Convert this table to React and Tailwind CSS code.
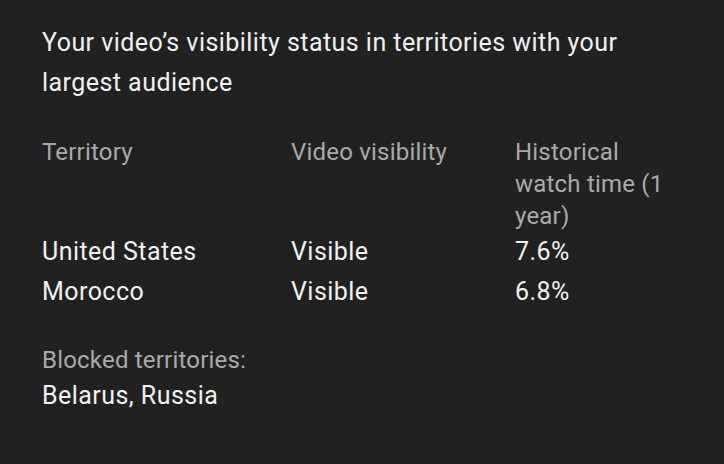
const rows = [
  { territory: 'United States', visibility: 'Visible', watch: '7.6%' },
  { territory: 'Morocco', visibility: 'Visible', watch: '6.8%' },
];

export default function App() {
  return (
    <div className="min-h-[464px] bg-[#212121] pt-[23px] pl-[42px] pr-[42px] text-[25px] tracking-[0.45px] text-[#f1f1f1] font-['Roboto',sans-serif]">
      <h1 className="leading-[40px] font-normal">
        Your video’s visibility status in territories with your largest audience
      </h1>

      <div className="mt-[33px] grid grid-cols-[249px_224px_1fr]">
        <div className="text-[24px] tracking-[0.2px] leading-[32px] text-[#aaaaaa]">Territory</div>
        <div className="text-[24px] tracking-[0.2px] leading-[32px] text-[#aaaaaa]">Video visibility</div>
        <div className="text-[24px] tracking-[0.2px] leading-[32px] text-[#aaaaaa]">Historical watch time (1 year)</div>
        {rows.map((row) => (
          <div key={row.territory} className="contents leading-[40px]">
            <div>{row.territory}</div>
            <div>{row.visibility}</div>
            <div>{row.watch}</div>
          </div>
        ))}
      </div>

      <div className="mt-[30px] leading-[36px]">
        <div className="text-[24px] tracking-[0.2px] text-[#aaaaaa]">Blocked territories:</div>
        <div>Belarus, Russia</div>
      </div>
    </div>
  );
}
